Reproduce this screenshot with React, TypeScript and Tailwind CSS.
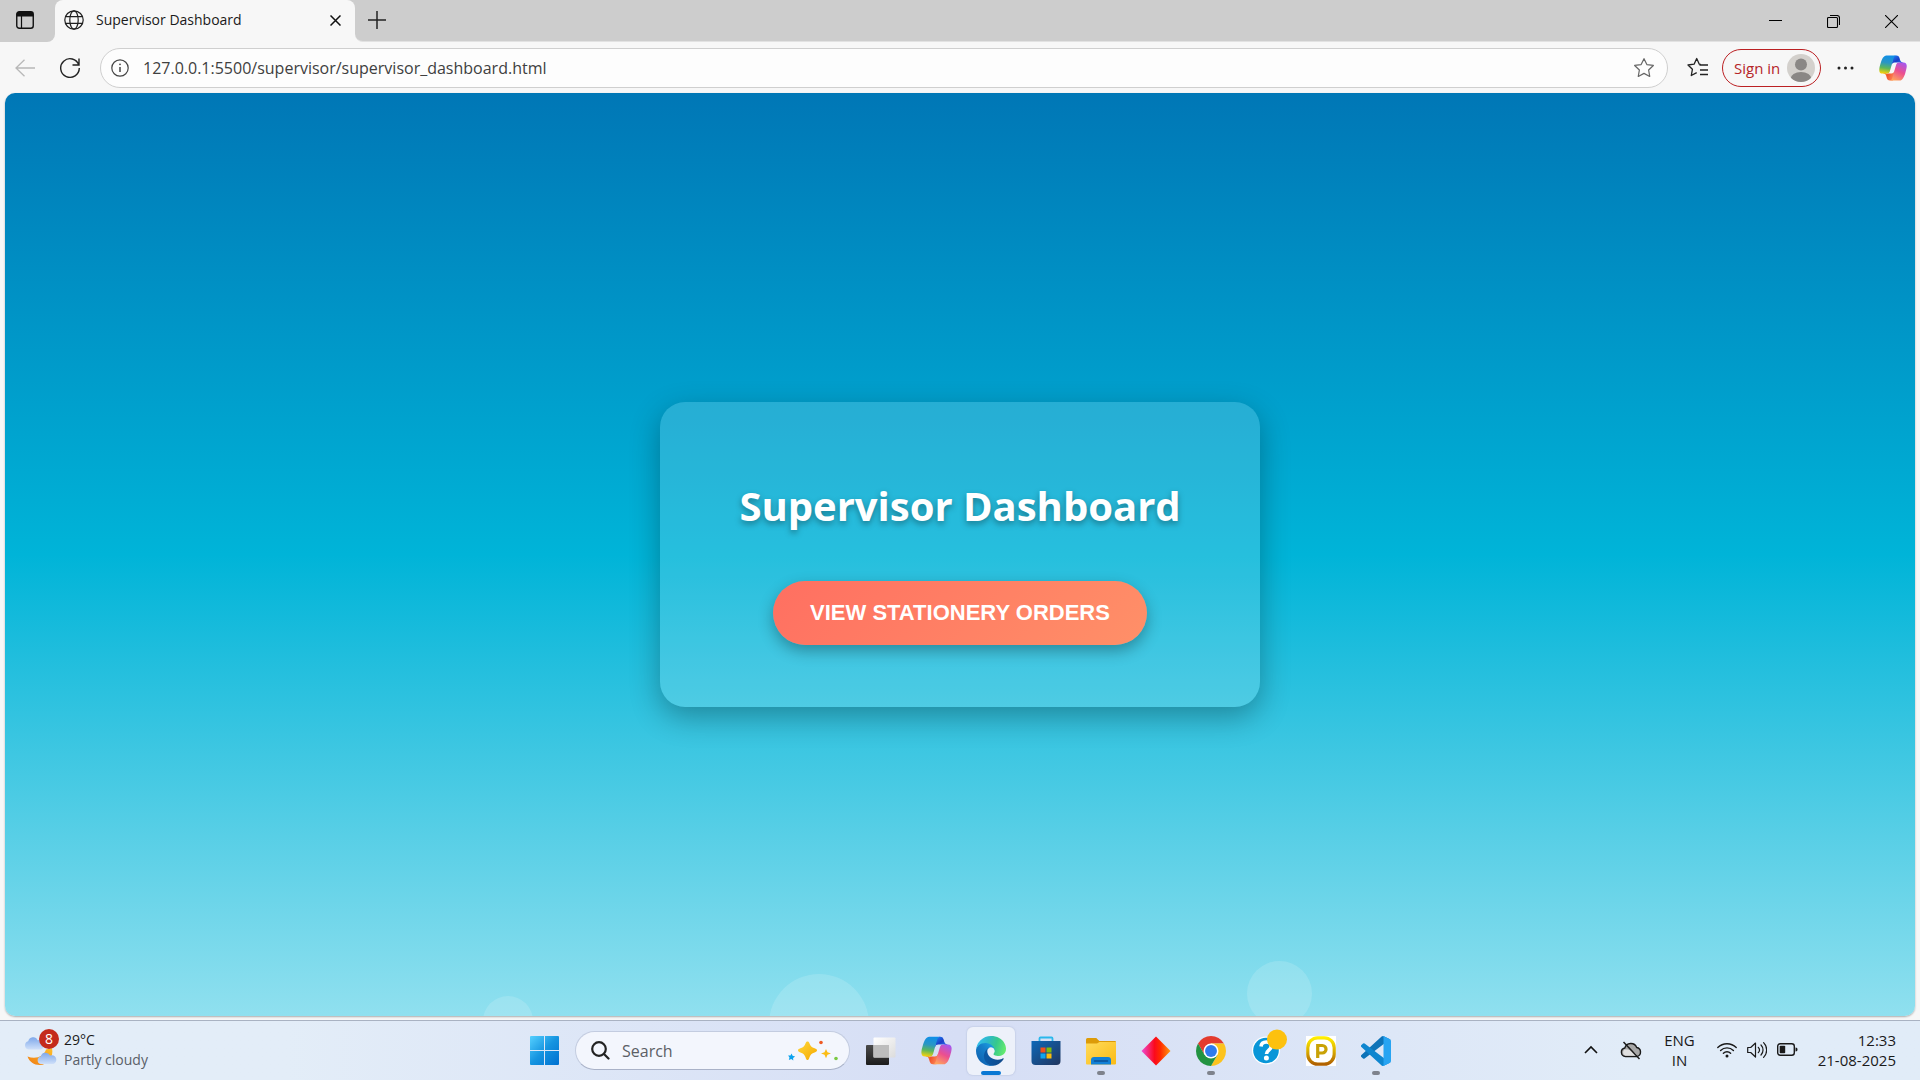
import React from "react";

function GlobeIcon() {
  return (
    <svg width="20" height="20" viewBox="0 0 20 20" fill="none" stroke="#1f1f1f" strokeWidth="1.2" aria-hidden="true">
      <circle cx="10" cy="10" r="9.2" />
      <ellipse cx="10" cy="10" rx="4.2" ry="9.2" />
      <path d="M1.6 6.7h16.8M1.6 13.3h16.8" />
    </svg>
  );
}

function CopilotIcon({ id, size }: { id: string; size: number }) {
  return (
    <svg width={size} height={size} viewBox="0 0 48 48" aria-hidden="true">
      <defs>
        <linearGradient id={id + "a"} x1="0.2" y1="0" x2="0.9" y2="0.8">
          <stop offset="0" stopColor="#1f7bf0" />
          <stop offset="0.5" stopColor="#1a3fc8" />
          <stop offset="1" stopColor="#2b7bf2" />
        </linearGradient>
        <linearGradient id={id + "b"} x1="0" y1="0.3" x2="1" y2="0.7">
          <stop offset="0" stopColor="#f5a23a" />
          <stop offset="0.4" stopColor="#f0542c" />
          <stop offset="1" stopColor="#ff8a5c" />
        </linearGradient>
        <linearGradient id={id + "c"} x1="0.5" y1="0" x2="0.35" y2="1">
          <stop offset="0" stopColor="#0f8fe8" />
          <stop offset="0.4" stopColor="#2a96c4" />
          <stop offset="0.7" stopColor="#5db75a" />
          <stop offset="1" stopColor="#f6d20c" />
        </linearGradient>
        <linearGradient id={id + "d"} x1="0.8" y1="0" x2="0.3" y2="1">
          <stop offset="0" stopColor="#a458f0" />
          <stop offset="0.5" stopColor="#ec4f8f" />
          <stop offset="1" stopColor="#ffa45c" />
        </linearGradient>
      </defs>
      <path fill={`url(#${id}a)`} d="M34.142 7.325A4.63 4.63 0 0 0 29.7 4h-1.35a4.63 4.63 0 0 0-4.554 3.794L21.48 20.407l.575-1.965a4.63 4.63 0 0 1 4.444-3.33h7.853l3.294 1.282 3.175-1.283h-.926a4.63 4.63 0 0 1-4.443-3.325z" />
      <path fill={`url(#${id}b)`} d="M14.33 40.656A4.63 4.63 0 0 0 18.779 44h2.87a4.63 4.63 0 0 0 4.629-4.51l.312-12.163-.654 2.233a4.63 4.63 0 0 1-4.443 3.329h-7.919l-2.823-1.532-3.057 1.532h.912a4.63 4.63 0 0 1 4.447 3.344z" />
      <path fill={`url(#${id}c)`} d="M29.5 4H13.46c-4.583 0-7.332 6.057-9.165 12.113C2.123 23.29-.718 32.888 7.502 32.888h6.925a4.63 4.63 0 0 0 4.45-3.35 2078 2078 0 0 1 6.116-21.066C25.8 5.8 27.2 4 29.5 4z" />
      <path fill={`url(#${id}d)`} d="M18.498 44h16.04c4.582 0 7.332-6.058 9.165-12.115 2.171-7.177 5.013-16.777-3.208-16.777H33.57a4.63 4.63 0 0 0-4.45 3.348 2078 2078 0 0 1-6.116 21.07C22.2 42.2 20.8 44 18.498 44z" />
    </svg>
  );
}

function EdgeIcon() {
  return (
    <svg width="30" height="30" viewBox="0 0 256 256" aria-hidden="true">
      <defs>
        <linearGradient id="edgeA" x1="0.2" y1="0.5" x2="1" y2="0.6">
          <stop offset="0" stopColor="#0c59a4" />
          <stop offset="1" stopColor="#114a8b" />
        </linearGradient>
        <linearGradient id="edgeB" x1="0.9" y1="0.2" x2="0.3" y2="0.9">
          <stop offset="0" stopColor="#1b9de2" />
          <stop offset="0.4" stopColor="#1680cb" />
          <stop offset="1" stopColor="#0f66b4" />
        </linearGradient>
        <linearGradient id="edgeC" x1="0" y1="0.4" x2="1" y2="0.6">
          <stop offset="0" stopColor="#35c1f1" />
          <stop offset="0.35" stopColor="#2fb9c8" />
          <stop offset="0.65" stopColor="#36c98c" />
          <stop offset="1" stopColor="#66eb6e" />
        </linearGradient>
      </defs>
      <path transform="translate(-4.63 -4.92)" fill="url(#edgeA)" d="M235.68 195.46a93.73 93.73 0 0 1-10.54 4.71 101.87 101.87 0 0 1-35.9 6.46c-47.32 0-88.54-32.55-88.54-74.32A31.48 31.48 0 0 1 117.13 104.9c-42.8 1.8-53.8 46.4-53.8 72.53 0 73.88 68.09 81.37 82.76 81.37 7.91 0 19.84-2.3 27-4.56l1.31-.44a128.34 128.34 0 0 0 66.6-52.8 4 4 0 0 0-5.32-5.54z" />
      <path fill="url(#edgeB)" d="M105.73 241.42A79.2 79.2 0 0 1 83 220.08a80.72 80.72 0 0 1 29.5-120.17c3.12-1.47 8.45-4.13 15.54-4a32.35 32.35 0 0 1 25.69 13 31.88 31.88 0 0 1 6.36 18.66c0-.21 24.46-79.6-80-79.6-43.9 0-80 41.66-80 78.21a130.15 130.15 0 0 0 12.11 56 128 128 0 0 0 156.38 67.11 75.55 75.55 0 0 1-62.78-8z" />
      <path fill="url(#edgeC)" d="M152.33 148.86c-.81 1.05-3.3 2.5-3.3 5.66 0 2.61 1.7 5.12 4.72 7.23 14.38 10 41.49 8.68 41.56 8.68a59.56 59.56 0 0 0 30.27-8.35 61.38 61.38 0 0 0 30.43-52.88c.26-22.41-8-37.31-11.34-43.91C223.51 22.33 177.81 0 128.06 0A128 128 0 0 0 .1 126.09c.48-36.54 36.8-66.05 80-66.05 3.5 0 23.46.34 42 10.07 16.34 8.58 24.9 18.94 30.85 29.21 6.18 10.67 7.28 24.15 7.28 29.52 0 5.37-2.74 13.33-7.9 20.02z" />
    </svg>
  );
}

function StartIcon() {
  return (
    <svg width="29" height="29" viewBox="0 0 29 29" aria-hidden="true">
      <defs>
        <linearGradient id="win" gradientUnits="userSpaceOnUse" x1="0" y1="0" x2="29" y2="29">
          <stop offset="0" stopColor="#55d0ff" />
          <stop offset="0.5" stopColor="#1594e0" />
          <stop offset="1" stopColor="#0070d0" />
        </linearGradient>
      </defs>
      <path fill="url(#win)" d="M1 0h13v14H0V1a1 1 0 0 1 1-1zM15 0h13a1 1 0 0 1 1 1v13H15zM0 15h14v14H1a1 1 0 0 1-1-1zM15 15h14v13a1 1 0 0 1-1 1H15z" />
    </svg>
  );
}

function SparklesIcon() {
  return (
    <svg width="52" height="22" viewBox="0 0 52 22" aria-hidden="true">
      <defs>
        <linearGradient id="spark" x1="0" y1="0" x2="1" y2="1">
          <stop offset="0" stopColor="#ffd83a" />
          <stop offset="1" stopColor="#f5a800" />
        </linearGradient>
      </defs>
      <path fill="url(#spark)" d="M20.500 1.500c.9 0 1.500.6 1.900 1.700 1 2.800 2.200 4 5.200 5 1.500.5 2.400 1.100 2.400 2.100s-.9 1.600-2.400 2.100c-3 1-4.200 2.200-5.200 5-.4 1.300-1 2.600-1.900 2.600s-1.500-1.300-1.900-2.600c-1-2.800-2.200-4-5.200-5-1.500-.5-2.400-1.100-2.400-2.100s.9-1.600 2.400-2.100c3-1 4.200-2.200 5.200-5 .4-1.100 1-1.700 1.900-1.700z" />
      <path fill="#fbbc14" d="M39 9l1.500 3.200 3.500 1.300-3.500 1.300L39 18.200l-1.500-3.400-3.500-1.300 3.500-1.300z" />
      <path fill="#0aa2ee" d="M4.500 13.500l1.100 2.200 2.500.8-2 1.500.2 2.400-2-1.300-2.500.9.700-2.500-1.400-2 2.400.1z" />
      <circle cx="34" cy="2.500" r="1.800" fill="#ee5a24" />
      <circle cx="49" cy="18.500" r="1.800" fill="#7ac943" />
    </svg>
  );
}

function TaskViewIcon() {
  return (
    <svg width="30" height="30" viewBox="0 0 30 30" aria-hidden="true">
      <defs>
        <linearGradient id="tvd" x1="0" y1="0" x2="0" y2="1">
          <stop offset="0" stopColor="#4a4a4a" />
          <stop offset="1" stopColor="#1c1c1c" />
        </linearGradient>
        <linearGradient id="tvl" x1="0" y1="0" x2="1" y2="1">
          <stop offset="0" stopColor="#ffffff" />
          <stop offset="1" stopColor="#dcdcdc" />
        </linearGradient>
      </defs>
      <rect x="0" y="9" width="23" height="20" rx="1" fill="url(#tvd)" />
      <rect x="7.500" y="1.500" width="22" height="20" rx="1" fill="url(#tvl)" />
      <rect x="7.500" y="9" width="15.500" height="12.500" fill="#bdbdbd" />
    </svg>
  );
}

function StoreIcon() {
  return (
    <svg width="30" height="30" viewBox="0 0 30 30" aria-hidden="true">
      <defs>
        <linearGradient id="store" x1="0" y1="0" x2="1" y2="1">
          <stop offset="0" stopColor="#0d68b8" />
          <stop offset="1" stopColor="#22365f" />
        </linearGradient>
      </defs>
      <path d="M8.500 6V2.500a1 1 0 0 1 1-1h11a1 1 0 0 1 1 1V6" fill="none" stroke="#2bb8ec" strokeWidth="1.800" />
      <path d="M.5 5h29v20a4 4 0 0 1-4 4h-21a4 4 0 0 1-4-4z" fill="url(#store)" />
      <path d="M9.500 11.500h5v5h-5z" fill="#f1511b" />
      <path d="M15.500 11.500h5v5h-5z" fill="#80bb0a" />
      <path d="M9.500 17.500h5v5h-5z" fill="#0fa5ee" />
      <path d="M15.500 17.500h5v5h-5z" fill="#fbbc0c" />
    </svg>
  );
}

function FolderIcon() {
  return (
    <svg width="30" height="30" viewBox="0 0 30 30" aria-hidden="true">
      <defs>
        <linearGradient id="fold" x1="0" y1="0" x2="1" y2="1">
          <stop offset="0" stopColor="#ffdb5c" />
          <stop offset="1" stopColor="#fbbb14" />
        </linearGradient>
      </defs>
      <path d="M0 8V3.500A1.500 1.500 0 0 1 1.500 2h8.800l3 3H29a1 1 0 0 1 1 1v3z" fill="#dd9b08" />
      <path d="M0 7.500h11l2.500-1.500H30v21.500a1 1 0 0 1-1 1H1a1 1 0 0 1-1-1z" fill="url(#fold)" />
      <path d="M5 28.500V24a3 3 0 0 1 3-3h14a3 3 0 0 1 3 3v4.500z" fill="#1180d6" />
      <path d="M8.500 25h13" stroke="#0a4f95" strokeWidth="1.500" strokeLinecap="round" />
    </svg>
  );
}

function DiamondIcon() {
  return (
    <svg width="30" height="30" viewBox="0 0 30 30" aria-hidden="true">
      <defs>
        <linearGradient id="dia" x1="0" y1="0" x2="1" y2="0">
          <stop offset="0" stopColor="#ee4bd6" />
          <stop offset="0.45" stopColor="#fb0a1c" />
          <stop offset="0.65" stopColor="#ff2a00" />
          <stop offset="1" stopColor="#ff9a10" />
        </linearGradient>
      </defs>
      <path d="M15 .5 29.500 15 15 29.500.5 15z" fill="url(#dia)" />
    </svg>
  );
}

function ChromeIcon() {
  return (
    <svg width="30" height="30" viewBox="0 0 48 48" aria-hidden="true">
      <path d="M24 12h20.780A24 24 0 0 0 3.220 12l10.390 18z" fill="#e33b2e" />
      <path d="M34.390 30 24 48A24 24 0 0 0 44.780 12H24z" fill="#fcc31e" />
      <path d="M13.610 30 3.220 12A24 24 0 0 0 24 48l10.390-18z" fill="#229342" />
      <circle cx="24" cy="24" r="12" fill="#fff" />
      <circle cx="24" cy="24" r="9.500" fill="#2f7bed" />
    </svg>
  );
}

function HelpIcon() {
  return (
    <svg width="36" height="36" viewBox="0 0 36 36" aria-hidden="true">
      <circle cx="14" cy="21.500" r="14" fill="#fff" />
      <circle cx="14" cy="21.500" r="12.800" fill="#0996d8" />
      <path d="M9 17.500c.3-3 2.300-4.500 5.300-4.500s4.900 1.700 4.900 4.200c0 4-4.700 3.800-4.700 7.800" fill="none" stroke="#fff" strokeWidth="3.600" />
      <circle cx="14.400" cy="29" r="2.500" fill="#fff" />
      <circle cx="25" cy="10.500" r="10" fill="#fdc10e" />
    </svg>
  );
}

function PIcon() {
  return (
    <svg width="30" height="30" viewBox="0 0 30 30" aria-hidden="true">
      <defs>
        <linearGradient id="pg" x1="0" y1="0" x2="0" y2="1">
          <stop offset="0" stopColor="#ffee00" />
          <stop offset="0.5" stopColor="#d9ae00" />
          <stop offset="1" stopColor="#b06000" />
        </linearGradient>
      </defs>
      <rect width="30" height="30" fill="#fff" />
      <rect x="1.800" y="1.800" width="26.400" height="26.400" rx="10" fill="#fff" stroke="url(#pg)" strokeWidth="3.200" />
      <path d="M11.700 22V9.500h4.600a3.600 3.600 0 0 1 0 7.500h-4.600" fill="none" stroke="#c9a206" strokeWidth="3.200" />
    </svg>
  );
}

function CodeIcon() {
  return (
    <svg width="30" height="30" viewBox="0 0 100 100" aria-hidden="true">
      <path fill="#0d73b8" d="M96.460 10.800 75.860.88a6.200 6.200 0 0 0-7.100 1.200L1.300 63.600a4.170 4.170 0 0 0 0 6.160l5.500 5a4.170 4.170 0 0 0 5.330.24l81.200-61.600c2.700-2.100 6.670-.1 6.670 3.300v-.24a6.250 6.250 0 0 0-3.540-5.630z" />
      <path fill="#0f86cf" d="M96.460 89.200 75.860 99.120a6.200 6.200 0 0 1-7.100-1.200L1.300 36.400a4.170 4.170 0 0 1 0-6.160l5.500-5a4.170 4.170 0 0 1 5.330-.24l81.200 61.600c2.700 2.100 6.670.1 6.670-3.300v.24a6.250 6.250 0 0 1-3.540 5.630z" />
      <path fill="#27a4f2" d="M75.860 99.130a6.200 6.200 0 0 1-7.100-1.200c2.300 2.300 6.250.67 6.250-2.600V4.680c0-3.260-3.940-4.900-6.250-2.600a6.200 6.200 0 0 1 7.100-1.200L96.460 10.800A6.250 6.250 0 0 1 100 16.400v67.200a6.250 6.250 0 0 1-3.540 5.620z" />
    </svg>
  );
}

function WeatherIcon() {
  return (
    <svg width="36" height="36" viewBox="0 0 36 36" aria-hidden="true">
      <defs>
        <linearGradient id="cl" x1="0" y1="0" x2="0" y2="1">
          <stop offset="0" stopColor="#7ea8ea" />
          <stop offset="1" stopColor="#cfe0fa" />
        </linearGradient>
        <linearGradient id="moon" x1="1" y1="0" x2="0" y2="1">
          <stop offset="0" stopColor="#ffc02a" />
          <stop offset="1" stopColor="#ef7d14" />
        </linearGradient>
      </defs>
      <path d="M28 16c2 9-4 17-12.500 17C10 33 5.500 30 3.500 24.500c8 3 16 .5 18.500-7z" fill="url(#moon)" />
      <path d="M4.500 17.500a4.200 4.200 0 0 1-.3-8.200 5 5 0 0 1 9.500-1A4.800 4.800 0 0 1 17 17.500z" fill="url(#cl)" />
      <path d="M17 32a3.800 3.800 0 0 1-.3-7.500 5 5 0 0 1 9.300-1 4.300 4.300 0 0 1 3.500 8.500z" fill="url(#cl)" />
    </svg>
  );
}

function TaskButton({
  label,
  active,
  running,
  children,
}: {
  label: string;
  active?: boolean;
  running?: boolean;
  children: React.ReactNode;
}) {
  return (
    <button
      type="button"
      aria-label={label}
      className={
        active
          ? "relative flex size-12 items-center justify-center rounded-md bg-[#edf1fa] shadow-[0_0_1px_1px_rgba(190,200,225,0.5)]"
          : "relative flex size-12 items-center justify-center rounded-md"
      }
    >
      {children}
      {active && <span className="absolute bottom-0 h-1 w-5 rounded-full bg-[#0a78d4]" />}
      {running && <span className="absolute bottom-0 h-1 w-2 rounded-full bg-[#7e828c]" />}
    </button>
  );
}

function TabStrip() {
  return (
    <div className="flex h-[42px] bg-[#f7f7f7]">
      <div className="flex w-[55px] items-center rounded-br-lg bg-[#cdcdcd] pl-4">
        <button type="button" aria-label="Tab actions menu">
          <svg width="18" height="18" viewBox="0 0 18 18" className="-mt-[2px]" aria-hidden="true">
            <rect x="0.750" y="0.750" width="16.500" height="16.500" rx="2.500" fill="none" stroke="#111" strokeWidth="1.400" />
            <path d="M.8 5.500V3A2.200 2.200 0 0 1 3 .8h12A2.200 2.200 0 0 1 17.200 3v2.500z" fill="#111" />
            <path d="M5.500 5v12" stroke="#111" strokeWidth="1.200" />
          </svg>
        </button>
      </div>
      <div className="bg-[#cdcdcd]">
        <div className="flex h-full w-[300px] items-center rounded-t-lg bg-[#f7f7f7] pr-3 pb-[2px] pl-[9px]">
          <GlobeIcon />
          <span className="ml-3 flex-1 text-sm text-[#1a1a1a]">Supervisor Dashboard</span>
          <button type="button" aria-label="Close tab" className="flex size-4 items-center justify-center">
            <svg width="11" height="11" viewBox="0 0 11 11" stroke="#111" strokeWidth="1.500" aria-hidden="true">
              <path d="M.5.5l10 10M10.500.5l-10 10" />
            </svg>
          </button>
        </div>
      </div>
      <div className="flex flex-1 items-center justify-between rounded-bl-lg border-b border-[#e2e2e2] bg-[#cdcdcd]">
        <button type="button" aria-label="New tab" className="flex size-11 items-center justify-center">
          <svg width="18" height="18" viewBox="0 0 18 18" stroke="#222" strokeWidth="1.500" className="-mt-[2px]" aria-hidden="true">
            <path d="M9 0v18M0 9h18" />
          </svg>
        </button>
        <div className="flex">
          <button type="button" aria-label="Minimize" className="flex h-10 w-[58px] items-center justify-center">
            <svg width="13" height="13" viewBox="0 0 13 13" stroke="#000" aria-hidden="true">
              <path d="M0 6.500h13" />
            </svg>
          </button>
          <button type="button" aria-label="Restore" className="flex h-10 w-[58px] items-center justify-center pt-[2px]">
            <svg width="13" height="13" viewBox="0 0 13 13" fill="none" stroke="#000" strokeWidth="1.100" aria-hidden="true">
              <rect x="0.500" y="2.500" width="10" height="10" rx="1" />
              <path d="M3 .5h7a2.500 2.500 0 0 1 2.500 2.500v7" />
            </svg>
          </button>
          <button type="button" aria-label="Close window" className="flex h-10 w-[58px] items-center justify-center pt-[2px]">
            <svg width="13" height="13" viewBox="0 0 13 13" stroke="#000" strokeWidth="1.100" aria-hidden="true">
              <path d="M0 0l13 13M13 0L0 13" />
            </svg>
          </button>
        </div>
      </div>
    </div>
  );
}

const starPath =
  "M10 1.500l2.600 5.400 5.900.8-4.300 4.100 1 5.900L10 14.900l-5.200 2.800 1-5.900L1.500 7.700l5.900-.8z";

function Toolbar() {
  return (
    <div className="flex h-[51px] items-center gap-[10px] bg-[#f7f7f7] pt-px pr-3 pl-[5px]">
      <button type="button" aria-label="Back" className="flex h-10 w-10 items-center justify-center">
        <svg width="20" height="18" viewBox="0 0 20 18" fill="none" stroke="#b8b8b8" strokeWidth="1.300" aria-hidden="true">
          <path d="M20 9H1M9.500.7L1 9l8.500 8.300" />
        </svg>
      </button>
      <button type="button" aria-label="Refresh" className="-ml-[5px] flex h-10 w-10 items-center justify-center">
        <svg width="22" height="22" viewBox="0 0 22 22" fill="none" stroke="#222" strokeWidth="1.400" aria-hidden="true">
          <path d="M19.800 8A9.300 9.300 0 1 0 20.300 11M20 1.500V8h-6.500" />
        </svg>
      </button>
      <form className="flex h-10 flex-1 items-center rounded-full border border-[#cfcfcf] bg-[#fdfdfd] pr-3 pl-[10px]">
        <svg width="18" height="18" viewBox="0 0 18 18" fill="none" stroke="#444" strokeWidth="1.200" aria-hidden="true">
          <circle cx="9" cy="9" r="8.200" />
          <path d="M9 8v5" strokeWidth="1.500" />
          <circle cx="9" cy="5.300" r="0.900" fill="#444" stroke="none" />
        </svg>
        <input
          aria-label="Address"
          readOnly
          value="127.0.0.1:5500/supervisor/supervisor_dashboard.html"
          className="ml-[14px] flex-1 bg-transparent text-base text-[#404040] outline-none"
        />
        <button type="button" aria-label="Add to favorites">
          <svg width="22" height="22" viewBox="0 0 20 20" fill="none" stroke="#666" strokeWidth="1.100" strokeLinejoin="round" aria-hidden="true">
            <path d={starPath} />
          </svg>
        </button>
      </form>
      <div className="flex items-center">
        <button type="button" aria-label="Favorites" className="ml-2 flex w-6 items-center justify-center">
          <svg width="22" height="22" viewBox="0 0 22 22" fill="none" stroke="#222" strokeWidth="1.300" strokeLinejoin="round" aria-hidden="true">
            <path d="M13.800 7.500 12.300 7.200 9.700 1.500 7.100 7.200 1 8l4.400 4.300-1.100 6.200 5.400-2.900M12.500 8H21M13 13h8M13 17.500h8" />
          </svg>
        </button>
        <button
          type="button"
          className="ml-3 flex h-[38px] items-center rounded-full border border-[#bb2023] pr-[5px] pl-[11px]"
        >
          <span className="w-[53px] text-left text-[15px] whitespace-nowrap text-[#b52528]">Sign in</span>
          <svg width="28" height="28" viewBox="0 0 28 28" aria-hidden="true">
            <defs>
              <clipPath id="avatar">
                <circle cx="14" cy="14" r="14" />
              </clipPath>
            </defs>
            <circle cx="14" cy="14" r="14" fill="#d3d0cc" />
            <g clipPath="url(#avatar)" fill="#8a8785">
              <circle cx="14" cy="10.500" r="6" />
              <ellipse cx="14" cy="25" rx="10.500" ry="7" />
            </g>
          </svg>
        </button>
        <button type="button" aria-label="Settings and more" className="ml-2 flex w-8 justify-center">
          <svg width="17" height="4" viewBox="0 0 17 4" fill="#222" aria-hidden="true">
            <circle cx="2" cy="2" r="1.500" />
            <circle cx="8.500" cy="2" r="1.500" />
            <circle cx="15" cy="2" r="1.500" />
          </svg>
        </button>
        <button type="button" aria-label="Copilot" className="ml-[17px]">
          <CopilotIcon id="cpt" size={30} />
        </button>
      </div>
    </div>
  );
}

function Page() {
  return (
    <main className="relative mx-[5px] mb-1 flex flex-1 items-center justify-center overflow-hidden rounded-[10px] bg-[linear-gradient(to_bottom,#0077b6,#00b4d8,#90e0ef)] shadow-[0_1px_2px_rgba(0,0,0,0.3)]">
      <span className="absolute -bottom-[30px] left-1/4 size-[50px] rounded-full bg-white/15" />
      <span className="absolute -bottom-[58px] left-[40%] size-[100px] rounded-full bg-white/15" />
      <span className="absolute -bottom-[10px] left-[65%] size-[65px] rounded-full bg-white/15" />
      <section className="flex w-[600px] flex-col items-center rounded-[25px] bg-white/15 px-10 pt-16 pb-[62px] shadow-[0_10px_30px_rgba(0,0,0,0.3)]">
        <h1 className="mb-[35px] text-[40px] leading-[80px] font-bold whitespace-nowrap text-white [text-shadow:0_3px_6px_rgba(0,0,0,0.35)]">
          Supervisor Dashboard
        </h1>
        <button
          type="button"
          className="h-16 rounded-full bg-[linear-gradient(135deg,#ff6f61,#ff9068)] px-[37px] pb-[2px] font-['Liberation_Sans',Arial,sans-serif] text-[22px] font-bold whitespace-nowrap text-white uppercase shadow-[0_6px_15px_rgba(0,0,0,0.3)]"
        >
          View Stationery Orders
        </button>
      </section>
    </main>
  );
}

function Taskbar() {
  return (
    <footer className="grid h-[60px] grid-cols-[1fr_auto_1fr] items-center border-t border-[#a9b2c2] bg-linear-to-r from-[#e3edf8] from-15% via-[#d6def5] via-50% to-[#e1ecf8] to-85% text-[#1a1a1a]">
      <button type="button" className="flex items-center pb-[2px] pl-6 text-left">
        <span className="relative">
          <WeatherIcon />
          <span className="absolute -top-[3px] left-[15px] flex size-5 items-center justify-center rounded-full bg-[#c42b1c] text-sm text-white">
            8
          </span>
        </span>
        <span className="ml-1 flex flex-col text-sm leading-5">
          <span>29°C</span>
          <span className="text-[#5a6068]">Partly cloudy</span>
        </span>
      </button>
      <nav className="flex items-center gap-[7px]" aria-label="Taskbar">
        <TaskButton label="Start">
          <StartIcon />
        </TaskButton>
        <label className="flex h-[39px] w-[275px] items-center rounded-full border border-[#c3cce0] border-b-[#a9b2c8] bg-[#f3f6fd] pr-[10px] pl-[15px]">
          <svg width="19" height="19" viewBox="0 0 19 19" fill="none" stroke="#222" strokeWidth="2.200" strokeLinecap="round" aria-hidden="true">
            <circle cx="8" cy="8" r="6.800" />
            <path d="M13 13l4.500 4.500" />
          </svg>
          <input
            aria-label="Search"
            placeholder="Search"
            className="ml-3 w-0 flex-1 bg-transparent text-base outline-none placeholder:text-[#5c5f66]"
          />
          <SparklesIcon />
        </label>
        <TaskButton label="Task view">
          <TaskViewIcon />
        </TaskButton>
        <TaskButton label="Copilot">
          <CopilotIcon id="cpb" size={33} />
        </TaskButton>
        <TaskButton label="Microsoft Edge" active>
          <EdgeIcon />
        </TaskButton>
        <TaskButton label="Microsoft Store">
          <StoreIcon />
        </TaskButton>
        <TaskButton label="File Explorer" running>
          <FolderIcon />
        </TaskButton>
        <TaskButton label="Diamond">
          <DiamondIcon />
        </TaskButton>
        <TaskButton label="Google Chrome" running>
          <ChromeIcon />
        </TaskButton>
        <TaskButton label="Help">
          <span className="-mt-2 ml-2">
            <HelpIcon />
          </span>
        </TaskButton>
        <TaskButton label="P">
          <PIcon />
        </TaskButton>
        <TaskButton label="Visual Studio Code" running>
          <CodeIcon />
        </TaskButton>
      </nav>
      <div className="flex items-center justify-end pr-6 pb-[2px] text-[15px] leading-5">
        <button type="button" aria-label="Show hidden icons">
          <svg width="14" height="9" viewBox="0 0 14 9" fill="none" stroke="#111" strokeWidth="1.600" aria-hidden="true">
            <path d="M1 8l6-6 6 6" />
          </svg>
        </button>
        <svg width="22" height="20" viewBox="0 0 22 20" className="ml-[22px]" aria-hidden="true">
          <path d="M5.500 16.500a4.300 4.300 0 0 1-.7-8.500A6.300 6.300 0 0 1 16.700 7.500a4.600 4.600 0 0 1 .3 9z" fill="#a8a8a8" stroke="#1a1a1a" strokeWidth="1.400" />
          <path d="M5.500 15.800a3.600 3.600 0 0 1-1-6.300c5-.5 10 1.500 13 6.300z" fill="#e0e0e0" />
          <path d="M3.500 2l16 17" stroke="#1a1a1a" strokeWidth="1.500" />
        </svg>
        <button type="button" className="ml-[22px] flex flex-col items-center">
          <span>ENG</span>
          <span>IN</span>
        </button>
        <button type="button" aria-label="Network, volume and battery" className="ml-[22px] flex items-center gap-[10px]">
          <svg width="20" height="16" viewBox="0 0 20 16" fill="none" stroke="#1a1a1a" strokeWidth="1.400" strokeLinecap="round" aria-hidden="true">
            <path d="M.8 5.500a13 13 0 0 1 18.400 0M3.600 8.500a9 9 0 0 1 12.800 0M6.400 11.300a5.100 5.100 0 0 1 7.200 0" />
            <circle cx="10" cy="14" r="1.500" fill="#1a1a1a" stroke="none" />
          </svg>
          <svg width="20" height="18" viewBox="0 0 20 18" fill="none" stroke="#1a1a1a" strokeWidth="1.200" strokeLinecap="round" strokeLinejoin="round" aria-hidden="true">
            <path d="M.7 6.500v5h3L8.500 16V2L3.700 6.500zM11.300 6.300a4 4 0 0 1 0 5.400M14 4a7.200 7.200 0 0 1 0 10M16.600 1.600a10.500 10.500 0 0 1 0 14.800" />
          </svg>
          <svg width="21" height="13" viewBox="0 0 21 13" aria-hidden="true">
            <rect x="0.700" y="0.700" width="16.600" height="11.600" rx="2.500" fill="none" stroke="#1a1a1a" strokeWidth="1.400" />
            <rect x="2.700" y="2.700" width="5.500" height="7.600" rx="0.800" fill="#1a1a1a" />
            <path d="M18.500 4.500c1.500 0 2 .8 2 2s-.5 2-2 2z" fill="#1a1a1a" />
          </svg>
        </button>
        <button type="button" className="ml-5 flex flex-col items-end">
          <span>12:33</span>
          <span>21-08-2025</span>
        </button>
      </div>
    </footer>
  );
}

export default function App() {
  return (
    <div className="flex min-h-screen flex-col bg-[#f7f7f7] font-['Open_Sans','Noto_Sans',sans-serif]">
      <header>
        <TabStrip />
        <Toolbar />
      </header>
      <Page />
      <Taskbar />
    </div>
  );
}
